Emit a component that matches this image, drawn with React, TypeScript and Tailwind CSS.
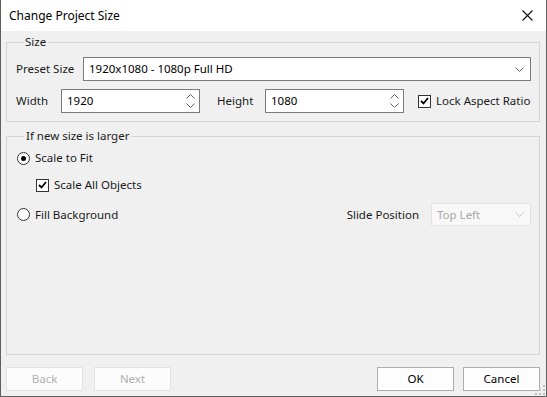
import { useState } from "react";

function Chevron({ className = "" }: { className?: string }) {
  return (
    <svg width="9" height="5" viewBox="0 0 9 5" className={className}>
      <path d="M0.5 0.5 L4.5 4.5 L8.5 0.5" fill="none" stroke="currentColor" strokeWidth="1" />
    </svg>
  );
}

function Spin({ value }: { value: string }) {
  return (
    <div className="flex h-[24px] w-[139px] items-center border border-[#7a7a7a] bg-white pl-[5px] pr-[4px]">
      <span className="flex-1 text-[#000]">{value}</span>
      <div className="flex flex-col gap-[4px] text-[#606060]">
        <svg width="9" height="5" viewBox="0 0 9 5">
          <path d="M0.5 4.5 L4.5 0.5 L8.5 4.5" fill="none" stroke="currentColor" strokeWidth="1" />
        </svg>
        <Chevron />
      </div>
    </div>
  );
}

function Check({ label, checked }: { label: string; checked: boolean }) {
  return (
    <label className="flex items-center gap-[5px] whitespace-nowrap">
      <span className="flex h-[13px] w-[13px] shrink-0 items-center justify-center border border-[#333] bg-white">
        {checked && (
          <svg width="9" height="8" viewBox="0 0 9 8">
            <path d="M1 4 L3.5 6.5 L8 1" fill="none" stroke="#000" strokeWidth="1.8" />
          </svg>
        )}
      </span>
      {label}
    </label>
  );
}

function Radio({ label, checked, onClick }: { label: string; checked: boolean; onClick: () => void }) {
  return (
    <label className="flex items-center gap-[5px] whitespace-nowrap" onClick={onClick}>
      <span className="flex h-[13px] w-[13px] shrink-0 items-center justify-center rounded-full border border-[#333] bg-white">
        {checked && <span className="h-[5px] w-[5px] rounded-full bg-black" />}
      </span>
      {label}
    </label>
  );
}

export default function App() {
  const [mode, setMode] = useState("fit");

  return (
    <div
      className="relative flex h-[397px] w-[547px] flex-col border-x border-b border-[#5f5f5f] text-[11.5px] text-[#1a1a1a]"
      style={{ fontFamily: '"Noto Sans", "Segoe UI", sans-serif' }}
    >
      <div className="flex h-[31px] items-center justify-between bg-white pl-[8px] pr-[13px]">
        <span className="text-[12px] text-black">Change Project Size</span>
        <svg width="11" height="11" viewBox="0 0 11 11">
          <path d="M0.5 0.5 L10.5 10.5 M10.5 0.5 L0.5 10.5" stroke="#111" strokeWidth="1.1" />
        </svg>
      </div>

      <div className="flex flex-1 flex-col bg-[#f0f0f0] pl-[5px] pr-[6px] pb-[5px]">
        <fieldset className="mt-[3px] border border-[#d5d5d5] px-[9px] pr-[8px] pt-[7px] pb-[8px]">
          <legend className="ml-[7px] px-[2px] leading-[16px]">Size</legend>
          <div className="flex h-[24px] items-center">
            <span className="w-[67px]">Preset Size</span>
            <div className="flex h-[24px] flex-1 items-center border border-[#7a7a7a] bg-white pl-[5px] pr-[6px]">
              <span className="flex-1 text-black">1920x1080 - 1080p Full HD</span>
              <Chevron className="text-[#606060]" />
            </div>
          </div>
          <div className="mt-[8px] flex h-[24px] items-center">
            <span className="w-[45px]">Width</span>
            <Spin value="1920" />
            <span className="ml-[17px] w-[48px]">Height</span>
            <Spin value="1080" />
            <div className="ml-[14px]">
              <Check label="Lock Aspect Ratio" checked />
            </div>
          </div>
        </fieldset>

        <fieldset className="mt-[6px] flex-1 border border-[#d5d5d5] pl-[10px] pr-[8px] pt-[4px]">
          <legend className="ml-[7px] px-[2px] leading-[16px]">If new size is larger</legend>
          <div className="flex h-[20px] items-center">
            <Radio label="Scale to Fit" checked={mode === "fit"} onClick={() => setMode("fit")} />
          </div>
          <div className="mt-[7px] flex h-[20px] items-center pl-[19px]">
            <Check label="Scale All Objects" checked />
          </div>
          <div className="mt-[8px] flex h-[23px] items-center">
            <Radio label="Fill Background" checked={mode === "fill"} onClick={() => setMode("fill")} />
            <span className="ml-auto mr-[12px]">Slide Position</span>
            <div className="flex h-[23px] w-[100px] items-center border border-[#e3e3e3] bg-[#f8f8f8] pl-[5px] pr-[6px] text-[#a8a8a8]">
              <span className="flex-1">Top Left</span>
              <Chevron className="text-[#c4c4c4]" />
            </div>
          </div>
        </fieldset>

        <div className="mt-[12px] flex h-[24px] items-stretch">
          <button className="w-[77px] border border-[#e3e3e3] bg-[#fcfcfc] text-[#b0b0b0]">Back</button>
          <button className="ml-[11px] w-[77px] border border-[#e3e3e3] bg-[#fcfcfc] text-[#b0b0b0]">Next</button>
          <button className="ml-auto w-[77px] border border-[#adadad] bg-[#fdfdfd] text-black">OK</button>
          <button className="ml-[9px] w-[77px] border border-[#adadad] bg-[#fdfdfd] text-black">Cancel</button>
        </div>
      </div>

      <svg className="absolute bottom-[1px] right-[1px]" width="10" height="10" viewBox="0 0 10 10">
        <g fill="#c0c0c0">
          <rect x="8" y="0" width="2" height="2" />
          <rect x="4" y="4" width="2" height="2" />
          <rect x="8" y="4" width="2" height="2" />
          <rect x="0" y="8" width="2" height="2" />
          <rect x="4" y="8" width="2" height="2" />
          <rect x="8" y="8" width="2" height="2" />
        </g>
      </svg>
    </div>
  );
}
